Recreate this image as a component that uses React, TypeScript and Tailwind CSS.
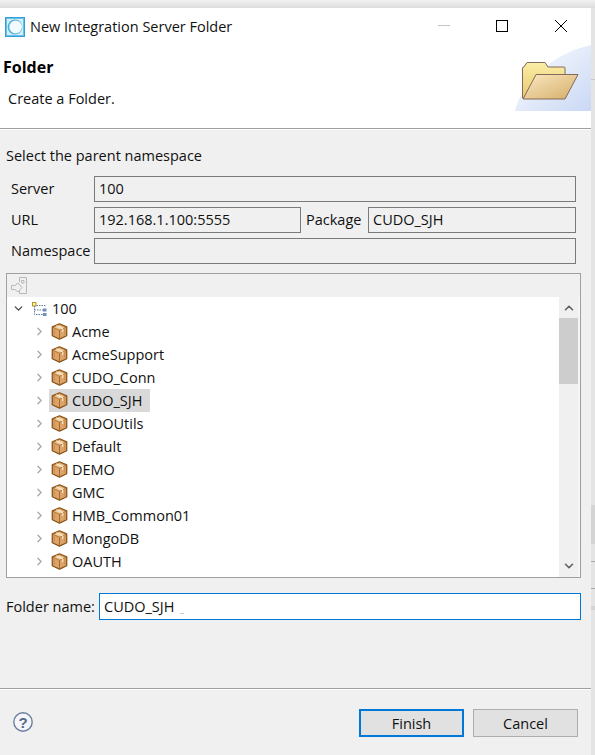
import { ChevronDown, ChevronRight, ChevronUp } from "lucide-react";

const font = "font-['Open_Sans','Noto_Sans',sans-serif]";

const bundles = [
  "Acme",
  "AcmeSupport",
  "CUDO_Conn",
  "CUDO_SJH",
  "CUDOUtils",
  "Default",
  "DEMO",
  "GMC",
  "HMB_Common01",
  "MongoDB",
  "OAUTH",
];

const AppIcon = () => (
  <svg width="20" height="20" viewBox="0 0 20 20">
    <rect x="0.5" y="0.5" width="19" height="19" fill="#fff" stroke="#2f9fd6" />
    <rect x="1.5" y="1.5" width="17" height="17" fill="#d6eef9" stroke="#6cc0e6" />
    <circle cx="10" cy="10" r="7.4" fill="#4aaedc" />
    <circle cx="10.6" cy="10" r="6.4" fill="#f2fafd" />
    <path d="M7 4.8 A6 6 0 0 0 7 15.2 A7 7 0 0 1 7 4.8 Z" fill="#9ad5ee" />
  </svg>
);

const FolderBanner = () => (
  <svg width="76" height="66" viewBox="0 0 76 66">
    <defs>
      <linearGradient id="wash" x1="0" y1="0" x2="1" y2="1">
        <stop offset="0" stopColor="#ffffff" />
        <stop offset="1" stopColor="#c9d8f4" />
      </linearGradient>
      <linearGradient id="back" x1="0" y1="0" x2="0" y2="1">
        <stop offset="0" stopColor="#fbeea6" />
        <stop offset="1" stopColor="#e8c970" />
      </linearGradient>
      <linearGradient id="front" x1="0" y1="0" x2="1" y2="1">
        <stop offset="0" stopColor="#fbe9c2" />
        <stop offset="1" stopColor="#d4ad68" />
      </linearGradient>
    </defs>
    <path d="M0 66 C8 34 40 8 76 0 V66 Z" fill="url(#wash)" />
    <path d="M7.5 53 V23 Q7.5 22 9 22 L12 17.5 H30 L33 22 H49 Q50 22 50 23 V53 Z" fill="url(#back)" stroke="#85695a" />
    <path d="M8 54 L21 29.5 H63 L50 54 Z" fill="url(#front)" stroke="#85695a" strokeLinejoin="round" />
  </svg>
);

const PackageIcon = () => (
  <svg width="17" height="17" viewBox="0 0 16 16" className="shrink-0">
    <path d="M8 0.8 L14.8 3.6 V12 L8 15.2 L1.2 12 V3.6 Z" fill="#dca46a" stroke="#8a5318" strokeWidth="1.2" strokeLinejoin="round" />
    <path d="M1.8 4 L8 6.8 L14.2 4 L8 1.4 Z" fill="#f0c998" stroke="#a46a2a" strokeWidth="0.8" />
    <path d="M8 6.8 V14.8" stroke="#a46a2a" />
    <path d="M5 2.6 L11 5.4 V8.5" stroke="#fdebd0" fill="none" />
    <path d="M3 5.5 V11 M13 5.5 V11" stroke="#c58a4a" fill="none" />
  </svg>
);

const ServerIcon = () => (
  <svg width="15" height="14" viewBox="0 0 15 14">
    <rect x="0.5" y="0.5" width="3.5" height="3.5" fill="#fff09a" stroke="#b3962f" />
    <path d="M2.5 4 V12.5 H11 M2.5 8 H11 M4.5 3.5 H14" stroke="#5f7ea6" strokeDasharray="1.5 1" fill="none" />
    <rect x="11" y="6.5" width="3.5" height="3" fill="#6f90bb" />
    <rect x="11" y="11" width="3.5" height="3" fill="#6f90bb" />
  </svg>
);

const CollapseIcon = () => (
  <svg width="17" height="18" viewBox="0 0 17 18" fill="none" stroke="#b8b8b8">
    <path d="M8.5 5 V0.5 H15.5 V16.5 H8.5 V14" />
    <path d="M10.5 3.5 H13 V6 H10.5 Z" />
    <path d="M0.5 8.5 H4 L7 6 L11 10.5 L7 15 L4 12.5 H0.5 Z" />
  </svg>
);

const HelpIcon = () => (
  <svg width="20" height="20" viewBox="0 0 20 20">
    <circle cx="10" cy="10" r="9.2" fill="#f4f6f9" stroke="#6b7f9e" strokeWidth="1.4" />
    <text x="10" y="15.5" textAnchor="middle" fontSize="15" fontWeight="700" fill="#55688a" fontFamily="Liberation Sans, sans-serif">?</text>
  </svg>
);

const ReadOnlyField = ({ value, className }: { value?: string; className?: string }) => (
  <div className={`h-[26px] border border-[#7a7a7a] bg-[#f0f0f0] pl-[4px] leading-[24px] text-[#111] ${className ?? ""}`}>
    {value}
  </div>
);

const App = () => {
  return (
    <div className={`${font} flex h-[755px] w-[595px] flex-col overflow-hidden bg-[#f0f0f0] text-[14.5px] text-[#111]`}>
      <div className="h-[8px] bg-gradient-to-b from-[#f2f2f2] to-[#dcdcdc]" />
      <div className="flex flex-1">
        <div className="flex w-[591px] flex-col">
          <div className="relative h-[121px] border-b border-[#a0a0a0] bg-white">
            <div className="flex h-[37px] items-center pl-[5px]">
              <AppIcon />
              <span className="ml-[5px]">New Integration Server Folder</span>
            </div>
            <svg width="132" height="14" viewBox="0 0 132 14" className="absolute left-[437px] top-[12px]" fill="none">
              <path d="M1 5.5 H13" stroke="#c4c4c4" />
              <rect x="59.5" y="0.5" width="11" height="11" stroke="#000" />
              <path d="M118 0 L130 12 M130 0 L118 12" stroke="#000" />
            </svg>
            <div className="absolute right-0 top-[37px]">
              <FolderBanner />
            </div>
            <div className="pl-[3px] pt-[9px] text-[16px] leading-[26px] font-bold text-black">Folder</div>
            <div className="pl-[8px] pt-[6px] leading-[26px]">Create a Folder.</div>
          </div>

          <div className="flex-1 border-t border-white pl-[6px] pr-[10px]">
            <div className="mt-[14px] leading-[24px]">Select the parent namespace</div>
            <div className="mt-[8px] flex flex-col gap-[5px]">
              <div className="flex items-center">
                <span className="w-[88px] pl-[5px]">Server</span>
                <ReadOnlyField value="100" className="flex-1 mr-[5px]" />
              </div>
              <div className="flex items-center">
                <span className="w-[88px] pl-[5px]">URL</span>
                <ReadOnlyField value="192.168.1.100:5555" className="w-[207px]" />
                <span className="ml-[5px] w-[62px]">Package</span>
                <ReadOnlyField value="CUDO_SJH" className="flex-1 mr-[5px]" />
              </div>
              <div className="flex items-center">
                <span className="w-[88px] pl-[5px]">Namespace</span>
                <ReadOnlyField className="flex-1 mr-[5px]" />
              </div>
            </div>

            <div className="mt-[9px] h-[305px] border border-[#a0a0a0]">
              <div className="flex h-[23px] items-center pl-[4px]">
                <CollapseIcon />
              </div>
              <div className="flex h-[280px]">
                <div className="flex-1 overflow-hidden bg-white">
                  <div className="flex h-[23px] items-center">
                    <ChevronDown size={13} strokeWidth={2.4} className="ml-[5px] text-[#444]" />
                    <span className="ml-[7px]"><ServerIcon /></span>
                    <span className="ml-[5px]">100</span>
                  </div>
                  {bundles.map((name) => (
                    <div key={name} className="flex h-[23px] items-center">
                      <ChevronRight size={13} strokeWidth={2.4} className="ml-[26px] shrink-0 text-[#a8a8a8]" />
                      <span className={`ml-[3px] flex h-[23px] items-center pl-[2px] ${name === "CUDO_SJH" ? "bg-[#d9d9d9] pr-[8px]" : "pr-[4px]"}`}>
                        <PackageIcon />
                        <span className="ml-[4px]">{name}</span>
                      </span>
                    </div>
                  ))}
                </div>
                <div className="flex w-[19px] flex-col items-center bg-[#f0f0f0]">
                  <ChevronUp size={14} strokeWidth={2.8} className="mt-[4px] text-[#606060]" />
                  <div className="mt-[3px] h-[66px] w-full bg-[#cdcdcd]" />
                  <ChevronDown size={14} strokeWidth={2.8} className="mt-auto mb-[4px] text-[#606060]" />
                </div>
                <div className="w-[2px] bg-[#f5f5f5]" />
              </div>
            </div>

            <div className="mt-[15px] flex items-center">
              <span className="w-[93px]">Folder name:</span>
              <div className="relative h-[27px] flex-1 border border-[#0078d7] bg-white pl-[4px] leading-[25px]">
                CUDO_SJH
                <span className="absolute left-[80px] top-[19px] h-px w-[4px] bg-[#c8c8c8]" />
              </div>
            </div>
          </div>

          <div className="h-[67px] border-t border-[#a0a0a0]">
            <div className="flex h-full border-t border-white pl-[13px] pr-[13px] pt-[19px]">
              <div className="mt-[3px]"><HelpIcon /></div>
              <button className="ml-auto h-[28px] w-[105px] border-2 border-[#0078d7] bg-[#e1e1e1] pt-px text-[#111]">Finish</button>
              <button className="ml-[9px] h-[28px] w-[105px] border border-[#adadad] bg-[#e1e1e1] pt-px text-[#111]">Cancel</button>
            </div>
          </div>
        </div>
        <div className="flex w-[4px] flex-col bg-[#e4e4e4]">
          <div className="mt-[71px] h-px bg-[#c8c8c8]" />
          <div className="mt-[425px] h-[39px] bg-[#d4d4d4]" />
          <div className="mt-[17px] h-px bg-[#a8a8a8]" />
          <div className="mt-[26px] h-px bg-[#a8a8a8]" />
          <div className="mt-[17px] h-[4px] bg-[#d4d4d4]" />
        </div>
      </div>
    </div>
  );
};

export default App;
